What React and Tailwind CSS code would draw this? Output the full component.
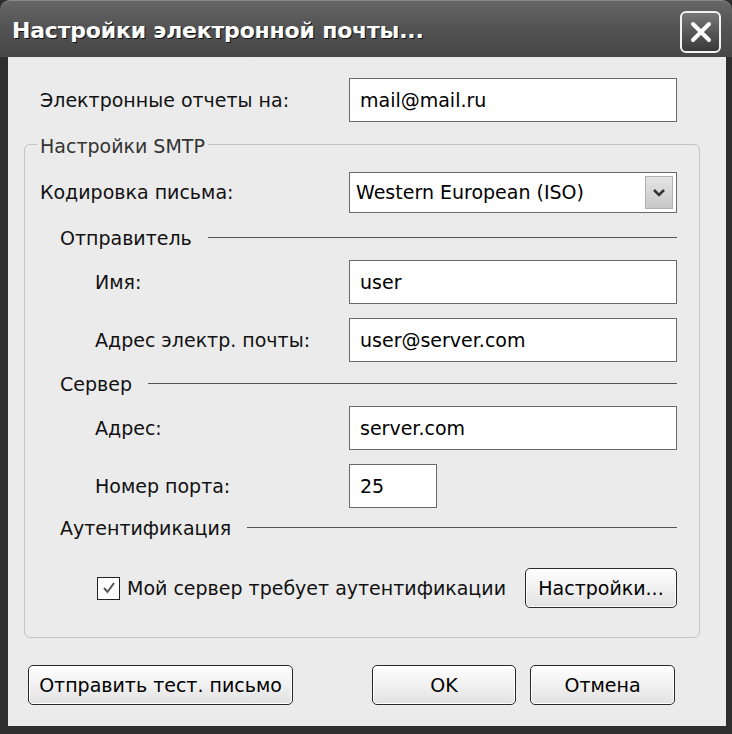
import React from "react";

const font = { fontFamily: '"DejaVu Sans", "Noto Sans", sans-serif' };

function Field({ value, w = "w-[328px]", h = "h-[44px]" }) {
  return (
    <div
      className={`${w} ${h} flex items-center border border-[#6a6a6a] bg-white pl-[10px] text-[19px] text-black`}
    >
      {value}
    </div>
  );
}

function Separator({ label, indent }) {
  return (
    <div className={`flex h-[24px] items-center ${indent}`}>
      <span className="text-[19px] text-[#111]">{label}</span>
      <div className="ml-[16px] h-[2px] flex-1 border-t border-[#555] border-b-white" />
    </div>
  );
}

function Button({ children, w }) {
  return (
    <button
      className={`${w} h-[40px] rounded-[5px] border-[1.5px] border-[#2a2a2a] bg-gradient-to-b from-white to-[#e2e2e2] text-[19px] text-black shadow-[inset_0_0_0_1px_#ffffff]`}
    >
      {children}
    </button>
  );
}

export default function App() {
  return (
    <div className="w-[732px] h-[734px] bg-[#2e2e2e] overflow-hidden" style={font}>
      {/* Title bar */}
      <div className="relative h-[57px] rounded-t-[10px] border-t border-[#8a8a8a] bg-gradient-to-b from-[#666] via-[#525252] to-[#474747] flex items-center px-[12px] pt-[3px]">
        <span className="text-[22px] font-bold text-white tracking-[-0.2px] [text-shadow:1px_1px_0_#111]">
          Настройки электронной почты...
        </span>
        <div className="absolute right-[11px] top-[10px] w-[41px] h-[42px] rounded-[6px] border-2 border-[#f2f2f2] bg-gradient-to-b from-[#777] to-[#3a3a3a] flex items-center justify-center">
          <svg width="24" height="24" viewBox="0 0 24 24">
            <path d="M4 4 L20 20 M20 4 L4 20" stroke="white" strokeWidth="4" strokeLinecap="round" />
          </svg>
        </div>
      </div>

      {/* Body */}
      <div className="ml-[8px] mr-[6px] h-[669px] bg-[#ebebeb] flex flex-col">
        <div className="mt-[21px] flex items-center pl-[32px]">
          <span className="w-[309px] text-[19px] text-[#111]">Электронные отчеты на:</span>
          <Field value="mail@mail.ru" />
        </div>

        {/* SMTP group */}
        <div className="relative mt-[22px] ml-[16px] w-[676px] h-[494px] rounded-[6px] border border-[#c4c4c4] flex flex-col pl-[15px] pr-[22px]">
          <span className="absolute -top-[13px] left-[12px] bg-[#ebebeb] px-[3px] text-[19px] text-[#333]">
            Настройки SMTP
          </span>

          <div className="mt-[27px] flex items-center">
            <span className="w-[309px] text-[19px] text-[#111]">Кодировка письма:</span>
            <div className="w-[328px] h-[41px] flex items-center justify-between border border-[#6a6a6a] bg-white pl-[6px] pr-[3px] text-[19px] text-black">
              Western European (ISO)
              <div className="w-[28px] h-[33px] flex items-center justify-center border border-[#b0b0b0] bg-gradient-to-b from-[#e4e4e4] to-[#c8c8c8]">
                <svg width="14" height="10" viewBox="0 0 14 10">
                  <path d="M2 2 L7 7 L12 2" stroke="#333" strokeWidth="2.5" fill="none" />
                </svg>
              </div>
            </div>
          </div>

          <div className="mt-[13px]">
            <Separator label="Отправитель" indent="pl-[20px]" />
          </div>

          <div className="mt-[10px] flex items-center pl-[55px]">
            <span className="w-[254px] text-[19px] text-[#111]">Имя:</span>
            <Field value="user" />
          </div>
          <div className="mt-[14px] flex items-center pl-[55px]">
            <span className="w-[254px] text-[19px] text-[#111]">Адрес электр. почты:</span>
            <Field value="user@server.com" />
          </div>

          <div className="mt-[10px]">
            <Separator label="Сервер" indent="pl-[20px]" />
          </div>

          <div className="mt-[10px] flex items-center pl-[55px]">
            <span className="w-[254px] text-[19px] text-[#111]">Адрес:</span>
            <Field value="server.com" />
          </div>
          <div className="mt-[14px] flex items-center pl-[55px]">
            <span className="w-[254px] text-[19px] text-[#111]">Номер порта:</span>
            <Field value="25" w="w-[88px]" />
          </div>

          <div className="mt-[8px]">
            <Separator label="Аутентификация" indent="pl-[20px]" />
          </div>

          <div className="mt-[28px] flex items-center pl-[57px]">
            <div className="w-[23px] h-[23px] border-[1.5px] border-[#222] bg-white flex items-center justify-center">
              <svg width="16" height="16" viewBox="0 0 16 16">
                <path d="M3 8 L6.5 12 L13 3" stroke="#555" strokeWidth="2" fill="none" />
              </svg>
            </div>
            <span className="ml-[7px] text-[19px] text-[#111]">Мой сервер требует аутентификации</span>
            <div className="flex-1" />
            <Button w="w-[152px]">Настройки...</Button>
          </div>
        </div>

        <div className="mt-[27px] flex items-center pl-[20px]">
          <Button w="w-[265px]">Отправить тест. письмо</Button>
          <div className="w-[79px]" />
          <Button w="w-[144px]">OK</Button>
          <div className="w-[14px]" />
          <Button w="w-[145px]">Отмена</Button>
        </div>
      </div>
    </div>
  );
}
